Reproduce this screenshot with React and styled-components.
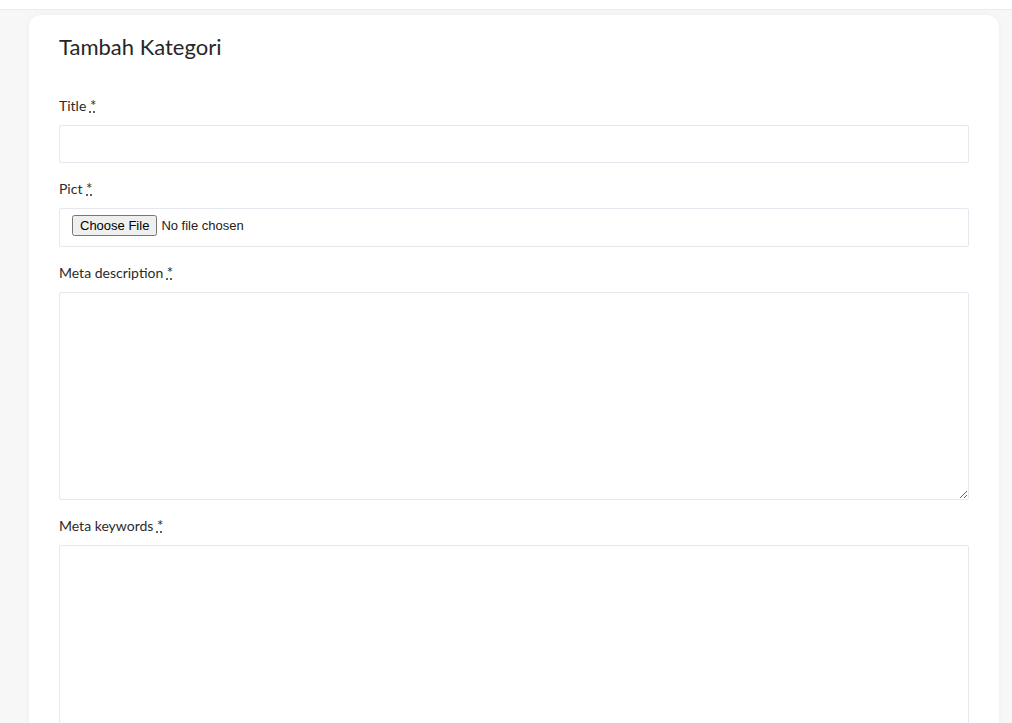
import styled, { createGlobalStyle } from "styled-components";

const GlobalStyle = createGlobalStyle`
    html, body {
        margin: 0;
        padding: 0;
        background: #f7f7f7;
        font-family: "Lato", "Noto Sans", sans-serif;
        color: #2b2b2b;
    }
    * {
        box-sizing: border-box;
    }
`;

const TopBar = styled.div`
    height: 10px;
    background: #ffffff;
    border-bottom: 1px solid #ebebeb;
`;

const Page = styled.div`
    padding: 5px 13px 0 29px;
`;

const Card = styled.div`
    background: #ffffff;
    border-radius: 12px;
    box-shadow: 0 0 6px rgba(0, 0, 0, 0.04);
    padding: 19px 30px 40px 30px;
`;

const Heading = styled.h3`
    margin: 0 0 36px 0;
    font-size: 22px;
    font-weight: 400;
    color: #262626;
    line-height: 26px;
`;

const Field = styled.div`
    margin-bottom: 16px;
`;

const Label = styled.label`
    display: block;
    font-size: 14px;
    color: #2b2b2b;
    line-height: 18px;
    margin-bottom: 10px;

    abbr {
        text-decoration: underline dotted;
        font-size: 15px;
        cursor: help;
    }
`;

const Input = styled.input`
    display: block;
    width: 100%;
    height: 38px;
    border: 1px solid #e6e7ef;
    border-radius: 2px;
    background: #fff;
    padding: 6px 12px;
    font-size: 14px;
    outline: none;
`;

const FileInput = styled(Input)`
    height: 39px;
    padding: 6px 12px 8px 12px;
    font-family: "Liberation Sans", Arial, sans-serif;
    font-size: 13px;
    color: #222;
`;

const TextArea = styled.textarea`
    display: block;
    width: 100%;
    height: ${props => props.$height}px;
    border: 1px solid #e6e7ef;
    border-radius: 2px;
    background: #fff;
    padding: 6px 12px;
    font-size: 14px;
    outline: none;
`;

function App() {
    return (
        <>
            <GlobalStyle />
            <TopBar />
            <Page>
                <Card>
                    <Heading>Tambah Kategori</Heading>
                    <Field>
                        <Label>Title <abbr title="required">*</abbr></Label>
                        <Input type="text" />
                    </Field>
                    <Field>
                        <Label>Pict <abbr title="required">*</abbr></Label>
                        <FileInput type="file" />
                    </Field>
                    <Field>
                        <Label>Meta description <abbr title="required">*</abbr></Label>
                        <TextArea $height={208} />
                    </Field>
                    <Field>
                        <Label>Meta keywords <abbr title="required">*</abbr></Label>
                        <TextArea $height={208} />
                    </Field>
                </Card>
            </Page>
        </>
    );
}

export default App;
